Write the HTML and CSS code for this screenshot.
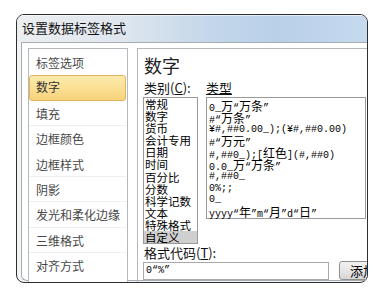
FILE: index.html
```html
<!DOCTYPE html>
<html lang="zh-CN">
<head>
  <meta charset="UTF-8" />
  <title>设置数据标签格式</title>
  <link rel="stylesheet" href="styles.css">
</head>
<body>
  <div class="window">
    <div class="titlebar">设置数据标签格式</div>
    <div class="client">
      <!-- left navigation -->
      <ul class="nav">
        <li>标签选项</li>
        <li class="active">数字</li>
        <li class="sep">填充</li>
        <li>边框颜色</li>
        <li class="sep">边框样式</li>
        <li class="sep">阴影</li>
        <li class="sep">发光和柔化边缘</li>
        <li class="sep">三维格式</li>
        <li>对齐方式</li>
      </ul>

      <!-- number panel -->
      <div class="panel">
        <h2>数字</h2>
        <div class="cols">
          <div class="col-cat">
            <div class="lbl">类别(<u>C</u>):</div>
            <ul class="catlist">
              <li>常规</li>
              <li>数字</li>
              <li>货币</li>
              <li>会计专用</li>
              <li>日期</li>
              <li>时间</li>
              <li>百分比</li>
              <li>分数</li>
              <li>科学记数</li>
              <li>文本</li>
              <li>特殊格式</li>
              <li class="selected">自定义</li>
            </ul>
          </div>
          <div class="col-type">
            <div class="lbl"><u>类型</u></div>
            <ul class="typelist">
              <li>0_<span class="cn">万</span>“<span class="cn">万条</span>”</li>
              <li>#“<span class="cn">万条</span>”</li>
              <li>¥#,##0.00_);(¥#,##0.00)</li>
              <li>#“<span class="cn">万元</span>”</li>
              <li>#,##0_);[<span class="cn">红色</span>](#,##0)</li>
              <li>0.0_<span class="cn">万</span>“<span class="cn">万条</span>”</li>
              <li>#,##0_</li>
              <li>0%;;</li>
              <li>0_</li>
              <li>yyyy“<span class="cn">年</span>”m“<span class="cn">月</span>”d“<span class="cn">日</span>”</li>
            </ul>
          </div>
        </div>
        <div class="lbl code-lbl">格式代码(<u>T</u>):</div>
        <div class="code-row">
          <input class="code-input" type="text" value="0“%”" />
          <button class="btn">添加</button>
        </div>
      </div>
    </div>
  </div>
</body>
</html>
```

FILE: styles.css
```css
body {
  margin: 0;
  padding: 14px 0 0 16px;
  background: #fff;
  font-family: "Noto Sans CJK SC", sans-serif;
  color: #000;
}
ul {
  list-style: none;
  margin: 0;
  padding: 0;
}
.window {
  box-sizing: border-box;
  width: 352px;
  height: 269px;
  border: 1px solid #2e2e2e;
  border-radius: 8px;
  overflow: hidden;
  background: #f4f5f6;
}
.titlebar {
  height: 27px;
  line-height: 26px;
  padding-left: 5px;
  font-size: 13px;
  color: #111;
  background: linear-gradient(to right, #eceef0 0%, #dfe6ee 30%, #c4d7ea 55%, #b9d0e9 75%, #c6daee 100%);
  box-shadow: inset 0 1px 0 rgba(255, 255, 255, 0.6);
}
.client {
  box-sizing: border-box;
  display: flex;
  align-items: flex-start;
  height: 239px;
  margin-left: 4px;
  padding: 5px 0 0 6px;
  background: #fff;
  border-top: 1px solid #a7acb1;
  border-left: 1px solid #a7acb1;
  border-bottom: 1px solid #a7acb1;
  border-bottom-left-radius: 6px;
}
.nav {
  box-sizing: border-box;
  flex: none;
  width: 100px;
  height: 240px;
  padding-top: 1px;
  border: 1px solid #b4b9bd;
  background: #fff;
}
.nav li {
  box-sizing: border-box;
  height: 25.4px;
  line-height: 25px;
  margin-right: 1px;
  padding-left: 7px;
  font-size: 12px;
  color: #484848;
  white-space: nowrap;
  border-bottom: 1px solid transparent;
}
.nav li.sep {
  border-bottom-color: #efefef;
}
.nav li.active {
  padding-left: 6px;
  line-height: 22px;
  border: 1px solid #e3b45a;
  border-radius: 3px;
  background: linear-gradient(to bottom, #fdeaae 0%, #fbe196 45%, #f6d27c 100%);
  color: #333;
}
.panel {
  box-sizing: border-box;
  flex: 1;
  height: 240px;
  margin-left: 9px;
  padding-left: 5px;
  border-top: 1px solid #b4b9bd;
  border-left: 1px solid #b4b9bd;
}
.panel h2 {
  margin: 4px 0 0 1px;
  font-size: 18px;
  font-weight: normal;
  line-height: 24px;
  color: #222;
}
.lbl {
  font-size: 13px;
  line-height: 16px;
  color: #111;
  margin-top: 3px;
  margin-left: 1px;
}
.cols {
  display: flex;
  gap: 8px;
}
.catlist {
  box-sizing: border-box;
  width: 55px;
  height: 147px;
  margin-top: 1px;
  border: 1px solid #9a9a9a;
  background: #fff;
}
.catlist li {
  height: 12.1px;
  line-height: 12px;
  padding-left: 1px;
  font-size: 11.5px;
  white-space: nowrap;
}
.catlist li.selected {
  background: #cfcfcf;
}
.col-type .lbl {
  margin-left: 0;
}
.typelist {
  box-sizing: border-box;
  width: 160px;
  height: 122px;
  margin-top: 1px;
  padding: 2px 0 0 2px;
  border: 1px solid #9a9a9a;
  background: #fff;
  font-family: "Liberation Mono", "Noto Sans CJK SC", monospace;
  font-size: 10px;
}
.typelist li {
  height: 11.8px;
  line-height: 12px;
  white-space: nowrap;
}
.typelist .cn {
  font-family: "Noto Sans CJK SC", sans-serif;
  font-size: 12px;
  line-height: 1;
}
.code-lbl {
  margin-top: 1px;
}
.code-row {
  display: flex;
  align-items: center;
  gap: 10px;
}
.code-input {
  box-sizing: border-box;
  width: 186px;
  height: 18px;
  margin: 0;
  padding: 0 2px;
  border: 1px solid #a9a9a9;
  font-family: "Liberation Mono", monospace;
  font-size: 10px;
  color: #000;
}
.btn {
  box-sizing: border-box;
  flex: none;
  width: 60px;
  height: 19px;
  padding: 0 0 0 10px;
  text-align: left;
  border: 1px solid #8e8f8f;
  border-radius: 3px;
  background: linear-gradient(to bottom, #f2f2f2 0%, #e6e6e6 50%, #d6d6d6 100%);
  font-family: "Noto Sans CJK SC", sans-serif;
  font-size: 13px;
  line-height: 16px;
}
```
